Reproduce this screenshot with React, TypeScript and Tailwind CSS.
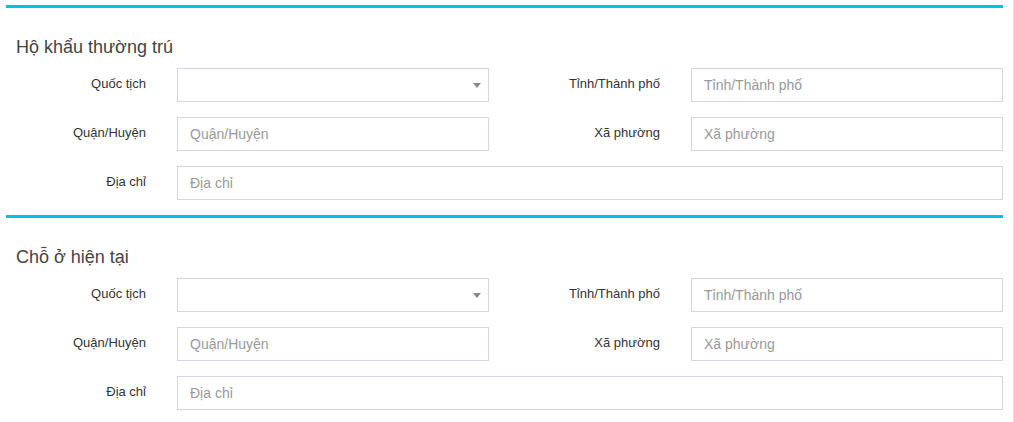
import React from 'react';

const font = { fontFamily: '"Liberation Sans", Arial, sans-serif' };

function Label({ text, width }: { text: string; width: string }) {
  return (
    <label className={`${width} shrink-0 pt-[7px] text-right text-[13px] leading-[18px] text-[#333]`}>
      {text}
    </label>
  );
}

function TextInput({ placeholder, width }: { placeholder: string; width: string }) {
  return (
    <input
      type="text"
      placeholder={placeholder}
      className={`${width} ml-[31px] h-[34px] shrink-0 border border-[#d2d6de] bg-white px-[12px] text-[14px] text-[#555] outline-none placeholder:text-[#999]`}
      style={font}
    />
  );
}

function SelectBox() {
  return (
    <div className="relative ml-[31px] h-[34px] w-[312px] shrink-0 border border-[#d2d6de] bg-white">
      <span className="absolute right-[7px] top-[14px] h-0 w-0 border-x-[4px] border-t-[5px] border-x-transparent border-t-[#888]" />
    </div>
  );
}

function AddressSection({ title }: { title: string }) {
  return (
    <section className="border-t-[3px] border-[#00c0ef] pb-[15px]">
      <h3 className="mt-[29px] pl-[10px] text-[18px] leading-[20px] text-[#444]">{title}</h3>
      <div className="mt-[11px] flex flex-col gap-[15px]">
        <div className="flex items-start">
          <Label text="Quốc tịch" width="w-[140px]" />
          <SelectBox />
          <Label text="Tỉnh/Thành phố" width="w-[171px]" />
          <TextInput placeholder="Tỉnh/Thành phố" width="w-[312px]" />
        </div>
        <div className="flex items-start">
          <Label text="Quận/Huyện" width="w-[140px]" />
          <TextInput placeholder="Quận/Huyện" width="w-[312px]" />
          <Label text="Xã phường" width="w-[171px]" />
          <TextInput placeholder="Xã phường" width="w-[312px]" />
        </div>
        <div className="flex items-start">
          <Label text="Địa chỉ" width="w-[140px]" />
          <TextInput placeholder="Địa chỉ" width="w-[826px]" />
        </div>
      </div>
    </section>
  );
}

export default function App() {
  return (
    <div className="h-[422px] w-[1014px] overflow-hidden border-r border-[#e3e3e3] bg-white" style={font}>
      <div className="ml-[6px] w-[997px] pt-[5px]">
        <AddressSection title="Hộ khẩu thường trú" />
        <AddressSection title="Chỗ ở hiện tại" />
      </div>
    </div>
  );
}
